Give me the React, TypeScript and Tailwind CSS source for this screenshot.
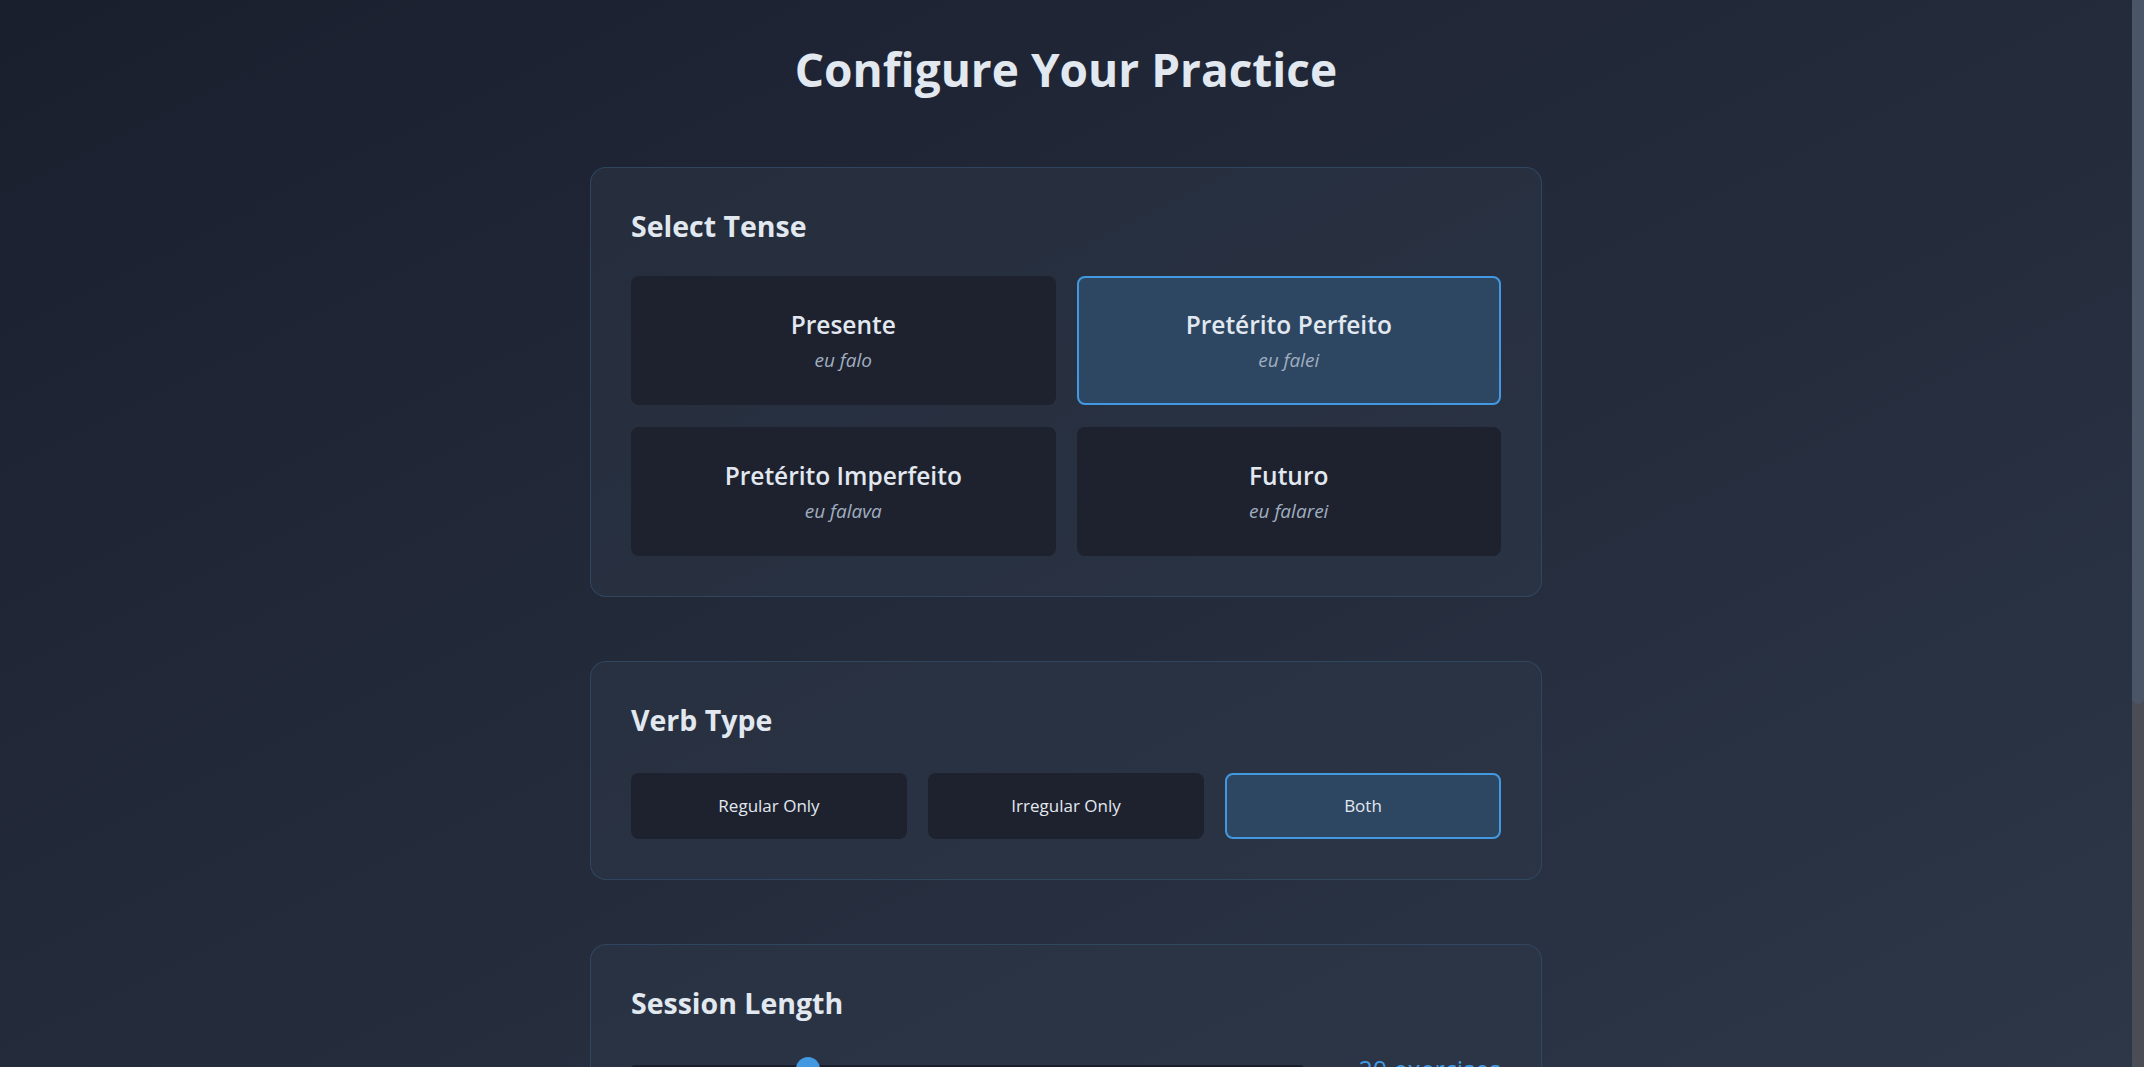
import React from "react";

const tenses = [
  { name: "Presente", ex: "eu falo", selected: false },
  { name: "Pretérito Perfeito", ex: "eu falei", selected: true },
  { name: "Pretérito Imperfeito", ex: "eu falava", selected: false },
  { name: "Futuro", ex: "eu falarei", selected: false },
];

const verbTypes = [
  { name: "Regular Only", selected: false },
  { name: "Irregular Only", selected: false },
  { name: "Both", selected: true },
];

function Card({ title, children }: { title: string; children: React.ReactNode }) {
  return (
    <section className="mb-16 rounded-2xl border border-[#35506e]/70 bg-[#2d3748]/50 p-10">
      <h2 className="mb-8 text-[28.5px] leading-9 font-bold text-[#e2e8f0]">{title}</h2>
      {children}
    </section>
  );
}

export default function App() {
  return (
    <div className="flex h-screen overflow-hidden bg-linear-to-br from-[#1a1f2e] to-[#2d3748] font-['Open_Sans','Noto_Sans',sans-serif] text-[#e2e8f0]">
      <main className="min-w-0 flex-1">
        <div className="mx-auto max-w-[1000px] px-6 pt-[40px] pb-24">
          <h1 className="mb-[69px] text-center text-[46px] leading-[58px] font-bold text-[#e2e8f0]">
            Configure Your Practice
          </h1>

          <Card title="Select Tense">
            <div className="grid grid-cols-2 gap-x-[21px] gap-y-[22px]">
              {tenses.map((t) => (
                <button
                  key={t.name}
                  className={
                    "flex h-[129px] flex-col items-center justify-center rounded-lg border-2 pt-[2px] " +
                    (t.selected ? "border-[#4299e1] bg-[#2d4661]" : "border-transparent bg-[#1e222e]")
                  }
                >
                  <span className="text-[24.5px] leading-8 font-semibold text-[#e2e8f0]">{t.name}</span>
                  <span className="mt-[5px] text-[19px] leading-7 text-[#a0aec0] italic">{t.ex}</span>
                </button>
              ))}
            </div>
          </Card>

          <Card title="Verb Type">
            <div className="grid grid-cols-3 gap-x-[21px] pt-[3px]">
              {verbTypes.map((v) => (
                <button
                  key={v.name}
                  className={
                    "flex h-[66px] items-center justify-center rounded-lg border-2 text-[17px] text-[#e2e8f0] " +
                    (v.selected ? "border-[#4299e1] bg-[#2d4661]" : "border-transparent bg-[#1e222e]")
                  }
                >
                  {v.name}
                </button>
              ))}
            </div>
          </Card>

          <Card title="Session Length">
            <div className="flex items-center gap-[54px]">
              <div className="relative h-2 flex-1 rounded-full bg-[#1a1f2b]">
                <div className="absolute top-1/2 left-[165px] h-6 w-6 -translate-y-1/2 rounded-full bg-[#4299e1]" />
              </div>
              <span className="text-[25px] leading-8 font-medium text-[#4299e1]">20 exercises</span>
            </div>
          </Card>

          <Card title="Practice Mode">
            <div className="grid grid-cols-2 gap-x-[21px]">
              <button className="flex h-[65px] items-center justify-center rounded-lg border-2 border-[#4299e1] bg-[#2d4661] text-[17px]">
                Type the Answer
              </button>
              <button className="flex h-[65px] items-center justify-center rounded-lg border-2 border-transparent bg-[#1e222e] text-[17px]">
                Multiple Choice
              </button>
            </div>
          </Card>

          <div className="flex justify-center">
            <button className="rounded-lg bg-[#4299e1] px-12 py-4 text-xl font-semibold text-white">Start Practice</button>
          </div>
        </div>
      </main>
      <div className="flex w-3 shrink-0 flex-col bg-[#4a4d55]">
        <div className="h-[704px] rounded-b-full bg-[#4b5568]" />
      </div>
    </div>
  );
}
